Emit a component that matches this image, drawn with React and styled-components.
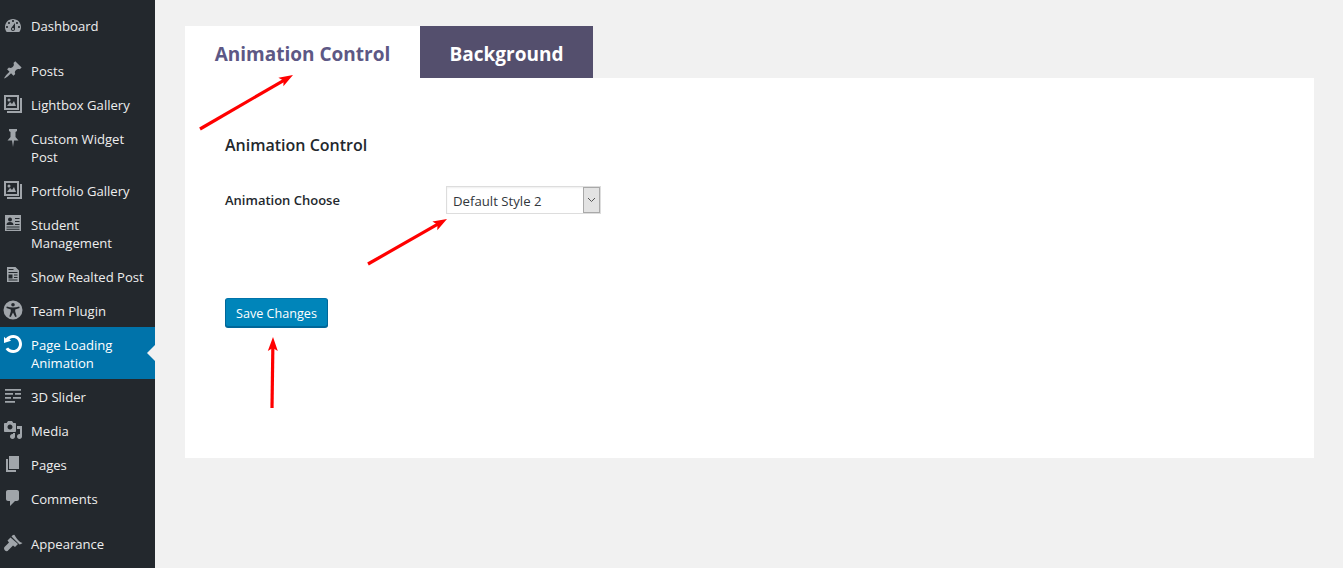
import React from "react";
import styled, { createGlobalStyle } from "styled-components";

const GlobalStyle = createGlobalStyle`
  html, body {
    margin: 0;
    padding: 0;
    background: #f1f1f1;
  }
  * {
    box-sizing: border-box;
  }
`;

const FONT = `"Open Sans", "Noto Sans", "Liberation Sans", sans-serif`;

const Page = styled.div`
  display: flex;
  height: 568px;
  overflow: hidden;
  position: relative;
  font-family: ${FONT};
`;

const Sidebar = styled.nav`
  width: 155px;
  flex: none;
  background: #23282d;
  padding-top: 8px;
`;

const MenuItem = styled.div`
  position: relative;
  display: flex;
  padding: 9px 8px 7px 31px;
  font-size: 13.1px;
  line-height: 18px;
  color: ${(p) => (p.$active ? "#fff" : "#eee")};
  background: ${(p) => (p.$active ? "#0073aa" : "transparent")};
  margin-bottom: ${(p) => (p.$gap ? "11px" : "0")};

  ${(p) =>
    p.$active &&
    `
    &::after {
      content: "";
      position: absolute;
      right: 0;
      top: 18px;
      border: 8px solid transparent;
      border-left: 0;
      border-right-color: #f1f1f1;
    }
  `}
`;

const MenuIcon = styled.svg`
  position: absolute;
  left: 3px;
  top: ${(p) => p.$top}px;
  width: 20px;
  height: 20px;
  fill: ${(p) => (p.$active ? "#fff" : "#a0a5aa")};
`;

const Main = styled.main`
  flex: 1;
  padding: 26px 29px 0 30px;
`;

const Tabs = styled.div`
  display: flex;
  height: 52px;
`;

const Tab = styled.div`
  display: flex;
  align-items: center;
  justify-content: center;
  width: ${(p) => p.$width}px;
  padding-top: 4px;
  font-size: 19px;
  font-weight: 700;
  background: ${(p) => (p.$active ? "#fff" : "#544f6d")};
  color: ${(p) => (p.$active ? "#5d5885" : "#fff")};
`;

const Panel = styled.section`
  background: #fff;
  height: 380px;
  padding: 55px 40px 0;
`;

const Heading = styled.h2`
  margin: 0;
  font-size: 16px;
  line-height: 24px;
  font-weight: 600;
  color: #23282d;
`;

const FieldRow = styled.div`
  display: flex;
  align-items: center;
  margin-top: 29px;
`;

const FieldLabel = styled.label`
  width: 221px;
  font-size: 13px;
  font-weight: 600;
  color: #23282d;
`;

const SelectWrap = styled.div`
  position: relative;
  width: 155px;
  height: 28px;
`;

const Select = styled.select`
  appearance: none;
  display: block;
  width: 100%;
  height: 100%;
  padding: 2px 22px 0 6px;
  border: 1px solid #ddd;
  border-radius: 0;
  background: #fff;
  font-family: ${FONT};
  font-size: 13.2px;
  color: #32373c;
  box-shadow: inset 0 1px 2px rgba(0, 0, 0, 0.07);
`;

const SelectArrow = styled.span`
  position: absolute;
  top: 1px;
  right: 1px;
  bottom: 1px;
  width: 17px;
  display: flex;
  align-items: center;
  justify-content: center;
  background: #e3e3e3;
  border: 1px solid #a9a9a9;
  pointer-events: none;

  svg {
    width: 9px;
    height: 6px;
    fill: none;
    stroke: #555;
    stroke-width: 1;
  }
`;

const SaveButton = styled.button`
  display: block;
  margin-top: 84px;
  width: 103px;
  height: 29px;
  padding: 2px 0 0;
  background: #0085ba;
  border: 1px solid #006799;
  border-color: #0073aa #006799 #006799;
  border-radius: 3px;
  box-shadow: 0 1px 0 #006799;
  font-family: ${FONT};
  font-size: 12.6px;
  color: #fff;
`;

const ArrowLayer = styled.svg`
  position: absolute;
  left: 0;
  top: 0;
  width: 1343px;
  height: 568px;
  pointer-events: none;
`;

const icons = {
  dashboard: (
    <path d="M3.76 16h12.48c1.1-1.37 1.76-3.11 1.76-5 0-4.42-3.58-8-8-8s-8 3.58-8 8c0 1.89.66 3.63 1.76 5zM10 4c.55 0 1 .45 1 1s-.45 1-1 1-1-.45-1-1 .45-1 1-1zM6 6c.55 0 1 .45 1 1s-.45 1-1 1-1-.45-1-1 .45-1 1-1zm8 0c.55 0 1 .45 1 1s-.45 1-1 1-1-.45-1-1 .45-1 1-1zm-5.37 5.55L12 7v6c0 1.1-.9 2-2 2s-2-.9-2-2c0-.57.24-1.08.63-1.45zM4 10c.55 0 1 .45 1 1s-.45 1-1 1-1-.45-1-1 .45-1 1-1zm12 0c.55 0 1 .45 1 1s-.45 1-1 1-1-.45-1-1 .45-1 1-1zm-5 3c0-.55-.45-1-1-1s-1 .45-1 1 .45 1 1 1 1-.45 1-1z" />
  ),
  post: (
    <path d="M10.44 3.02l1.82-1.82 6.36 6.35-1.83 1.82c-1.05-.68-2.48-.57-3.41.36l-.75.75c-.92.93-1.04 2.35-.35 3.41l-1.83 1.82-2.41-2.41-2.8 2.79c-.42.42-3.38 2.71-3.8 2.29s1.86-3.39 2.28-3.81l2.79-2.79L4.1 9.36l1.83-1.82c1.05.69 2.48.57 3.4-.36l.75-.75c.93-.92 1.05-2.35.36-3.41z" />
  ),
  gallery: (
    <path
      fillRule="evenodd"
      d="M1 1h15v15H1zM3 3v11h11V3zM4 12l3-4 2 2 2-3 2 5zM6 4.5a1.500 1.500 0 1 1 0 3 1.500 1.500 0 0 1 0-3zM17 4h2v15H4v-2h13z"
    />
  ),
  pin: <path d="M6 1h8v2l-1.500 1v5l3 3.500H11L10 19l-1-6.500H4.500l3-3.500V4L6 3z" />,
  student: (
    <path
      fillRule="evenodd"
      d="M2 1h16v16H2zM7 3.500a2 2 0 1 0 0 4 2 2 0 0 0 0-4zM3.500 11h7c0-2-1.200-3-3.500-3s-3.500 1-3.500 3zM12 4v1h4.500V4zM12 7v1h4.500V7zM12 10v1h4.500v-1zM3.500 12.500v1h13v-1zM3.500 14.800v1h13v-1z"
    />
  ),
  document: (
    <path
      fillRule="evenodd"
      d="M4 1h8.500L16 4.500V16H4zM5.500 3v1h5V3zM5.500 6v1h9V6zM5.500 8.500v4h4v-4zM11 8.500v1h3.500v-1zM11 11v1h3.500v-1zM5.500 13.500v1h9v-1z"
    />
  ),
  access: (
    <path
      fillRule="evenodd"
      d="M10 .5a9.500 9.500 0 1 1 0 19 9.500 9.500 0 0 1 0-19zM10 3a1.800 1.800 0 1 0 0 3.600A1.800 1.800 0 0 0 10 3zM3.800 6.600l-.4 1.500 4.400 1.300v2.200L6.300 16.500l1.500.6L10 12.500l2.200 4.600 1.500-.6-1.500-4.900V9.400l4.400-1.300-.4-1.500c-2 .5-4 .9-6.200.9s-4.200-.4-6.200-.9z"
    />
  ),
  rotate: (
    <path d="M10.250 1.020c5.100 0 8.750 4.040 8.750 9s-3.650 9-8.750 9c-3.200 0-6.020-1.590-7.680-4.030l2.590-1.520c1.140 1.500 2.950 2.550 5.090 2.550 3.470 0 5.750-2.750 5.750-6s-2.280-6-5.750-6c-1.480 0-2.770.47-3.790 1.260l1.560 1.590L1 9V2.800l1.700 1.750c1.800-2.150 4.500-3.530 7.550-3.530z" />
  ),
  slider: (
    <path d="M2 3h16v1.700H2zM2 7h8v1.700H2zM12 7h6v1.700h-6zM2 11h6v1.700H2zM10 11h8v1.700h-8zM2 15h10v1.700H2z" />
  ),
  media: (
    <path d="M13 11V4c0-.55-.45-1-1-1h-1.670L9 1H5L3.670 3H2c-.55 0-1 .45-1 1v7c0 .55.45 1 1 1h10c.55 0 1-.45 1-1zM7 4.500c1.380 0 2.500 1.120 2.500 2.500S8.380 9.500 7 9.500 4.500 8.380 4.500 7 5.620 4.500 7 4.500zM14 6h5v10.500c0 1.380-1.120 2.500-2.500 2.500S14 17.880 14 16.500s1.120-2.500 2.500-2.500c.17 0 .34.02.5.05V9h-3V6zm-4 8.050V13h2v3.500c0 1.380-1.120 2.500-2.500 2.500S7 17.880 7 16.500 8.120 14 9.500 14c.17 0 .34.02.5.05z" />
  ),
  page: <path d="M6 15V2h10v13H6zm-1 1h8v2H3V5h2v11z" />,
  comments: (
    <path d="M5 2h9c1.100 0 2 .9 2 2v7c0 1.100-.9 2-2 2h-2l-5 5v-5H5c-1.100 0-2-.9-2-2V4c0-1.100.9-2 2-2z" />
  ),
  appearance: (
    <path d="M8.500 3.500l8 8c1-.3 2-.6 3-1.500-2-.5-3-1.500-4.500-3S12.500 3.500 11.500 2c-1-.5-2 .5-3 1.500zM7.500 4.500l-3 3 1.500 2-4.500 4.500C.8 14.800.8 16.300 2 17.500s2.700.8 3.500-.5L10 12.500l2 1.500 3-3z" />
  ),
};

const menu = [
  { label: "Dashboard", icon: "dashboard", top: 8, gap: true },
  { label: "Posts", icon: "post", top: 7 },
  { label: "Lightbox Gallery", icon: "gallery", top: 7 },
  { label: "Custom Widget Post", icon: "pin", top: 7 },
  { label: "Portfolio Gallery", icon: "gallery", top: 7 },
  { label: "Student Management", icon: "student", top: 7 },
  { label: "Show Realted Post", icon: "document", top: 7 },
  { label: "Team Plugin", icon: "access", top: 7 },
  { label: "Page Loading Animation", icon: "rotate", top: 7, active: true },
  { label: "3D Slider", icon: "slider", top: 7 },
  { label: "Media", icon: "media", top: 7 },
  { label: "Pages", icon: "page", top: 7 },
  { label: "Comments", icon: "comments", top: 7, gap: true },
  { label: "Appearance", icon: "appearance", top: 7 },
];

const arrows = [
  { from: [200, 129], to: [293, 75] },
  { from: [368, 264], to: [447, 219] },
  { from: [272, 408], to: [273, 337] },
];

const RedArrow = ({ from, to }) => {
  const angle = (Math.atan2(to[1] - from[1], to[0] - from[0]) * 180) / Math.PI;
  const length = Math.hypot(to[0] - from[0], to[1] - from[1]);
  return (
    <g transform={`translate(${from[0]} ${from[1]}) rotate(${angle})`}>
      <line x1="0" y1="0" x2={length - 8} y2="0" stroke="#ff0000" strokeWidth="3.2" />
      <polygon
        points={`${length},0 ${length - 14},-5 ${length - 11},0 ${length - 14},5`}
        fill="#ff0000"
      />
    </g>
  );
};

const App = () => (
  <Page>
    <GlobalStyle />
    <Sidebar>
      {menu.map((item) => (
        <MenuItem key={item.label} $active={item.active} $gap={item.gap}>
          <MenuIcon viewBox="0 0 20 20" $active={item.active} $top={item.top}>
            {icons[item.icon]}
          </MenuIcon>
          {item.label}
        </MenuItem>
      ))}
    </Sidebar>
    <Main>
      <Tabs>
        <Tab $active $width={235}>
          Animation Control
        </Tab>
        <Tab $width={173}>Background</Tab>
      </Tabs>
      <Panel>
        <Heading>Animation Control</Heading>
        <FieldRow>
          <FieldLabel>Animation Choose</FieldLabel>
          <SelectWrap>
            <Select defaultValue="Default Style 2">
              <option>Default Style 2</option>
            </Select>
            <SelectArrow>
              <svg viewBox="0 0 9 6">
                <path d="M1 1l3.500 3.500L8 1" />
              </svg>
            </SelectArrow>
          </SelectWrap>
        </FieldRow>
        <SaveButton>Save Changes</SaveButton>
      </Panel>
    </Main>
    <ArrowLayer viewBox="0 0 1343 568">
      {arrows.map((arrow) => (
        <RedArrow key={arrow.from[0]} from={arrow.from} to={arrow.to} />
      ))}
    </ArrowLayer>
  </Page>
);

export default App;
